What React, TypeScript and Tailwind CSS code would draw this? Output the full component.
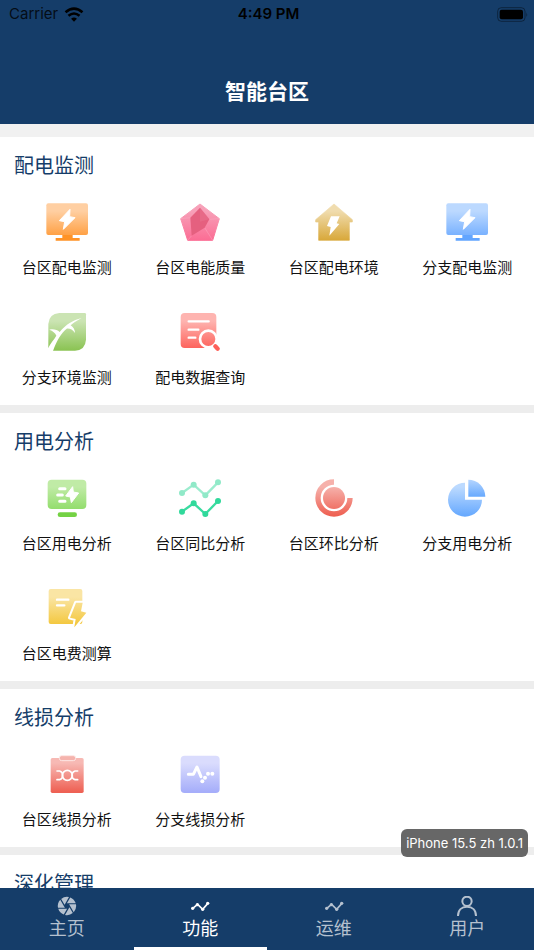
import type { ReactNode } from 'react';
import { useState } from 'react';
import { clsx } from 'clsx';
import { MdCamera } from 'react-icons/md';

const BOLT = '72,25 40,59 56,62 52,85 87,50 71,47';

function Gradient({ id, from, to }: { id: string; from: string; to: string }) {
    return (
        <linearGradient id={id} gradientUnits="userSpaceOnUse" x1="0" y1="30" x2="0" y2="116">
            <stop offset="0" stopColor={from} />
            <stop offset="1" stopColor={to} />
        </linearGradient>
    );
}

function Icon({ children }: { children: ReactNode }) {
    return (
        <svg viewBox="0 0 126 126" className="size-[42px]" aria-hidden="true">
            {children}
        </svg>
    );
}

function MonitorIcon({ id, from, to, base }: { id: string; from: string; to: string; base: string }) {
    return (
        <Icon>
            <Gradient id={id} from={from} to={to} />
            <path d="M49 98h31v13h21v8H29v-8h20z" fill={base} />
            <rect x="1" y="7" width="125" height="95" rx="6" fill={`url(#${id})`} />
            <polygon points={BOLT} fill="#fff" stroke="#fff" strokeWidth="3" strokeLinejoin="round" />
        </Icon>
    );
}

function PentagonIcon() {
    return (
        <Icon>
            <Gradient id="pentagon" from="#f7a0b8" to="#fb6e95" />
            <polygon points="63,9 121,53 101,118 26,118 5,53" fill="url(#pentagon)" stroke="url(#pentagon)" strokeWidth="3" strokeLinejoin="round" />
            <path d="M63 20V9M91 55l30-2M38 104l-12 14M34 50L5 53M77 80l24 38" stroke="#fbb3c8" strokeWidth="2" opacity=".6" />
            <polygon points="63,20 91,55 77,80 38,104 34,50" fill="#e5607f" />
            <polygon points="63,20 91,55 63,62" fill="#ea7390" opacity=".5" />
        </Icon>
    );
}

function HouseIcon() {
    return (
        <Icon>
            <Gradient id="house" from="#f0dcae" to="#d9a93c" />
            <path d="M63 9L118 56v7h-9v55H17V63H8v-7z" fill="url(#house)" stroke="url(#house)" strokeWidth="2" strokeLinejoin="round" />
            <polygon points="54,46 80,46 71,67 79,69 49,104 53,78 42,75" fill="#fff" />
        </Icon>
    );
}

function LeafIcon() {
    return (
        <Icon>
            <Gradient id="leaf" from="#cbe4b3" to="#8cc455" />
            <path d="M40 6h76q4 0 4 4v76q-2 31-33 33H11q-4 0-4-4V39q2-31 33-33z" fill="url(#leaf)" />
            <path
                d="M6 112C14 96 24 86 31 74 28 66 20 59 10 56 22 53 34 56 41 63 60 40 80 28 107 21 92 29 82 36 74 43 82 48 87 57 87 66 80 56 72 52 62 53 46 66 32 88 21 120H6z"
                fill="#fff"
            />
        </Icon>
    );
}

function DocSearchIcon() {
    return (
        <Icon>
            <Gradient id="docsearch" from="#feb4b0" to="#fd5f58" />
            <rect x="5" y="6" width="107" height="105" rx="12" fill="url(#docsearch)" />
            <path d="M29 31h60M29 56h29M29 80h20" stroke="#fff" strokeWidth="7" strokeLinecap="round" />
            <path d="M106 103l10 9" stroke="#fff" strokeWidth="25" strokeLinecap="round" />
            <circle cx="88" cy="84" r="25" fill="url(#docsearch)" stroke="#fff" strokeWidth="8" />
            <path d="M109 106l7 7" stroke="#fd5f58" strokeWidth="13" strokeLinecap="round" />
        </Icon>
    );
}

function PowerScreenIcon() {
    return (
        <Icon>
            <Gradient id="powerscreen" from="#c0eba6" to="#85d95c" />
            <rect x="5" y="8" width="116" height="88" rx="12" fill="url(#powerscreen)" />
            <rect x="35" y="106" width="58" height="14" rx="7" fill="#74d244" />
            <path d="M41 35h16M35 54h14M41 73h16" stroke="#fff" strokeWidth="9" strokeLinecap="round" />
            <polygon points="80,29 59,57 73,60 76,77 98,48 82,45" fill="#fff" stroke="#fff" strokeWidth="3" strokeLinejoin="round" />
        </Icon>
    );
}

function TrendLine({ color, light }: { color: string; light: string }) {
    return (
        <g fill={color}>
            <path d="M9 48l35-25 35 32 38-39" fill="none" stroke={light} strokeWidth="7" />
            <circle cx="9" cy="48" r="9" />
            <circle cx="44" cy="23" r="9" />
            <circle cx="79" cy="55" r="9" />
            <circle cx="117" cy="16" r="9" />
        </g>
    );
}

function TrendsIcon() {
    return (
        <Icon>
            <TrendLine color="#90e9c8" light="#9becce" />
            <g transform="translate(0 56)">
                <TrendLine color="#30d99b" light="#3adba0" />
            </g>
        </Icon>
    );
}

function RingIcon() {
    return (
        <Icon>
            <Gradient id="ring" from="#f6b1ab" to="#ee6052" />
            <path d="M63 15A48 48 0 1 0 111 63" fill="none" stroke="url(#ring)" strokeWidth="16" />
            <circle cx="63" cy="63" r="33" fill="url(#ring)" />
        </Icon>
    );
}

function PieIcon() {
    return (
        <Icon>
            <Gradient id="pie" from="#bcdaff" to="#67a9fe" />
            <linearGradient id="pieslice" x1="0" y1="0" x2="0" y2="1">
                <stop offset="0" stopColor="#b4d5ff" />
                <stop offset="1" stopColor="#67a9fe" />
            </linearGradient>
            <path d="M57 17A51 51 0 1 0 108 68H57z" fill="url(#pie)" />
            <path d="M67 8A51 51 0 0 1 118 59H67z" fill="url(#pieslice)" />
        </Icon>
    );
}

function BillIcon() {
    const bolt = '90,47 110,47 105,73 121,77 85,121 89,96 72,92';
    return (
        <Icon>
            <Gradient id="bill" from="#fae5a4" to="#f3c63a" />
            <rect x="8" y="6" width="101" height="105" rx="6" fill="url(#bill)" />
            <path d="M33 38h34M33 55h22" stroke="#fff" strokeWidth="7" strokeLinecap="round" />
            <polygon points={bolt} fill="#fff" stroke="#fff" strokeWidth="12" strokeLinejoin="round" />
            <polygon points={bolt} fill="url(#bill)" />
        </Icon>
    );
}

function ClipboardIcon() {
    return (
        <Icon>
            <Gradient id="clipboard" from="#f7b9b4" to="#ee6154" />
            <rect x="14" y="15" width="99" height="105" rx="5" fill="url(#clipboard)" />
            <rect x="40" y="8" width="49" height="15" rx="7" fill="#f5b3ad" stroke="#fde8e6" strokeWidth="3" />
            <g fill="none" stroke="#fff" strokeWidth="5" strokeLinecap="round">
                <circle cx="64" cy="67" r="15" />
                <path d="M33 54h8q9 2 9 13t-9 13h-8M95 54h-8q-9 2-9 13t9 13h8" />
            </g>
        </Icon>
    );
}

function PulseIcon() {
    return (
        <Icon>
            <Gradient id="pulse" from="#dadcfd" to="#a6aefa" />
            <rect x="5" y="8" width="117" height="112" rx="12" fill="url(#pulse)" />
            <path d="M28 64h15l11-22 12 29" fill="none" stroke="#fff" strokeWidth="9" strokeLinecap="round" strokeLinejoin="round" />
            <g fill="#fff">
                <circle cx="70" cy="85" r="6" />
                <circle cx="78" cy="74" r="6" />
                <circle cx="87" cy="62" r="6" />
                <circle cx="100" cy="62" r="6" />
            </g>
        </Icon>
    );
}

const sections = [
    {
        title: '配电监测',
        items: [
            { label: '台区配电监测', icon: <MonitorIcon id="monitor-orange" from="#ffcfa2" to="#ff9833" base="#ff9326" /> },
            { label: '台区电能质量', icon: <PentagonIcon /> },
            { label: '台区配电环境', icon: <HouseIcon /> },
            { label: '分支配电监测', icon: <MonitorIcon id="monitor-blue" from="#bcd9ff" to="#6caaff" base="#62a5ff" /> },
            { label: '分支环境监测', icon: <LeafIcon /> },
            { label: '配电数据查询', icon: <DocSearchIcon /> },
        ],
    },
    {
        title: '用电分析',
        items: [
            { label: '台区用电分析', icon: <PowerScreenIcon /> },
            { label: '台区同比分析', icon: <TrendsIcon /> },
            { label: '台区环比分析', icon: <RingIcon /> },
            { label: '分支用电分析', icon: <PieIcon /> },
            { label: '台区电费测算', icon: <BillIcon /> },
        ],
    },
    {
        title: '线损分析',
        items: [
            { label: '台区线损分析', icon: <ClipboardIcon /> },
            { label: '分支线损分析', icon: <PulseIcon /> },
        ],
    },
    { title: '深化管理', items: [] },
];

function LineIcon() {
    return (
        <svg viewBox="0 0 60 60" className="size-5" aria-hidden="true">
            <path d="M8 37l15-12 15 15 15-17" fill="none" stroke="currentColor" strokeWidth="5" />
            <g fill="currentColor">
                <circle cx="8" cy="37" r="5" />
                <circle cx="22" cy="26" r="5" />
                <circle cx="38" cy="40" r="5" />
                <circle cx="53" cy="22" r="5" />
            </g>
        </svg>
    );
}

function UserIcon() {
    return (
        <svg viewBox="0 0 60 60" className="size-5" fill="none" stroke="currentColor" strokeWidth="6" aria-hidden="true">
            <circle cx="30" cy="16" r="14" />
            <path d="M3 60C3 42 14 32 30 32s27 10 27 28" />
        </svg>
    );
}

const tabs = [
    { label: '主页', icon: <MdCamera className="size-[22px] -m-px" /> },
    { label: '功能', icon: <LineIcon /> },
    { label: '运维', icon: <LineIcon /> },
    { label: '用户', icon: <UserIcon /> },
];

function StatusBar() {
    return (
        <div className="grid h-7 grid-cols-3 items-center pr-1.5 pl-[9px] font-['Inter',sans-serif] text-[15px] text-black">
            <div className="flex items-center gap-1.5">
                <span className="text-black/80">Carrier</span>
                <svg viewBox="0 0 60 46" className="h-[15px] w-5" fill="none" stroke="currentColor" aria-label="Wi-Fi">
                    <path d="M4 16Q30-6 56 16" strokeWidth="8" />
                    <path d="M13 27q17-14 34 0" strokeWidth="8" />
                    <path d="M30 45l-9-9q9-8 18 0z" fill="currentColor" stroke="none" />
                </svg>
            </div>
            <span className="text-center font-semibold">4:49 PM</span>
            <svg viewBox="0 0 93 45" className="h-[15px] w-[31px] justify-self-end" aria-label="Battery">
                <rect x="2" y="2" width="82" height="41" rx="11" fill="none" stroke="#000" strokeOpacity=".4" strokeWidth="3" />
                <rect x="8" y="8" width="70" height="29" rx="6" fill="#000" />
                <path d="M88 16q5 7 0 14z" fill="#000" opacity=".4" />
            </svg>
        </div>
    );
}

export default function App() {
    const [active, setActive] = useState('功能');

    return (
        <div className="relative flex h-screen flex-col bg-[#f1f1f1] font-['Noto_Sans_CJK_SC',sans-serif]">
            <header className="h-[124px] shrink-0 bg-[#153d69]">
                <StatusBar />
                <h1 className="pt-12 text-center text-[21px] leading-7 font-bold text-white">智能台区</h1>
            </header>

            <main className="min-h-0 flex-1 overflow-y-auto pt-[13px] [scrollbar-width:none]">
                <div className="flex flex-col gap-2 bg-[#ededed]">
                    {sections.map((section) => (
                        <section key={section.title} className="bg-white">
                            <h2 className="h-12 px-3.5 pt-3 text-xl leading-8 text-[#153d69]">{section.title}</h2>
                            <div className="grid grid-cols-4">
                                {section.items.map((item) => (
                                    <button key={item.label} type="button" className="flex flex-col items-center gap-3.5 pt-4 pb-[18px]">
                                        {item.icon}
                                        <span className="text-[15px] leading-5 text-[#111]">{item.label}</span>
                                    </button>
                                ))}
                            </div>
                        </section>
                    ))}
                </div>
            </main>

            {/* Build info */}
            <div className="absolute right-1.5 bottom-[93px] rounded-md bg-[#5f5f5f]/95 px-[5px] font-['Inter',sans-serif] text-[13px] leading-7 text-white">
                iPhone 15.5 zh 1.0.1
            </div>

            <nav className="grid shrink-0 grid-cols-4 bg-[#153d69]">
                {tabs.map((tab) => (
                    <button
                        key={tab.label}
                        type="button"
                        onClick={() => setActive(tab.label)}
                        className={clsx(
                            'flex flex-col items-center border-b-[3px] pt-2 pb-2',
                            active === tab.label ? 'border-white text-white' : 'border-transparent text-[#b5c1cf]'
                        )}
                    >
                        {tab.icon}
                        <span className="text-lg leading-[23px]">{tab.label}</span>
                    </button>
                ))}
            </nav>
        </div>
    );
}
